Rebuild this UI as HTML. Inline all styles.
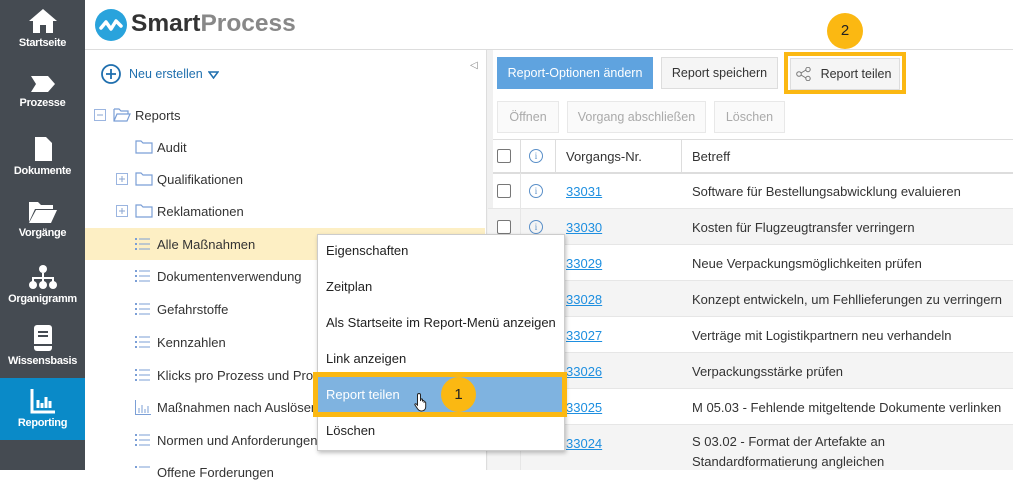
<!DOCTYPE html>
<html><head><meta charset="utf-8"><style>
*{margin:0;padding:0;box-sizing:border-box}
body{width:1013px;height:470px;overflow:hidden;background:#fff;font-family:"Liberation Sans",Arial,sans-serif;font-size:13px;color:#333;position:relative}
.a{position:absolute}
#side{left:0;top:0;width:85px;height:470px;background:#454b52}
.nav{position:absolute;left:0;width:85px;text-align:center;color:#fff;font-size:11px;font-weight:bold;letter-spacing:-0.3px}
.nav svg{display:block;margin:0 auto 3px}
.tr{position:absolute;white-space:nowrap;font-size:13px;color:#333}
.btn{position:absolute;height:32px;border:1px solid #ddd;background:#f5f5f5;font-size:12.5px;line-height:30px;text-align:center;color:#333;white-space:nowrap}
.dis{color:#aaa;background:#fafafa;border-color:#e8e8e8}
.row{position:absolute;left:488px;width:525px;height:36px;border-bottom:1px solid #e6e6e6;white-space:nowrap}
.row .cb{position:absolute;left:9px;top:11px;width:14px;height:14px;border:1.5px solid #777;border-radius:2px;background:#fff}
.row .in{position:absolute;left:41px;top:11px;width:14px;height:14px;border:1px solid #5a8fc8;border-radius:50%;font-size:9px;color:#5a8fc8;text-align:center;line-height:12px;font-family:"Liberation Serif",serif}
.row .n{position:absolute;left:78px;top:11px;color:#1e8fe0;text-decoration:underline}
.row .t{position:absolute;left:204px;top:11px;color:#333}
.mi{position:absolute;font-size:13px;color:#222;white-space:nowrap}
</style></head><body>
<div id="side" class="a"></div>
<div class="a" style="left:0;top:378px;width:85px;height:62px;background:#0a8ac8"></div>
<div class="nav" style="top:8px"><svg width="30" height="26" viewBox="0 0 30 26"><path d="M15 1L1 13h4v12h7v-8h6v8h7V13h4z" fill="#fff"/></svg>Startseite</div>
<div class="nav" style="top:74px"><svg width="26" height="20" viewBox="0 0 26 20"><path d="M1 2h17l7 8-7 8H1l5-8z" fill="#fff"/></svg>Prozesse</div>
<div class="nav" style="top:136px"><svg width="20" height="26" viewBox="0 0 20 26"><path d="M2 1h11l6 6v18H2z" fill="#fff"/></svg>Dokumente</div>
<div class="nav" style="top:200px"><svg width="30" height="24" viewBox="0 0 30 24"><path d="M1 2h9l3 3h12v4H7L1 22z M8 10h21l-6 13H1z" fill="#fff"/></svg>Vorgänge</div>
<div class="nav" style="top:264px"><svg width="30" height="26" viewBox="0 0 30 26"><circle cx="15" cy="5" r="4" fill="#fff"/><path d="M15 9v5M5 18v-4h20v4M15 14v4" stroke="#fff" stroke-width="2" fill="none"/><circle cx="5" cy="21" r="4" fill="#fff"/><circle cx="15" cy="21" r="4" fill="#fff"/><circle cx="25" cy="21" r="4" fill="#fff"/></svg>Organigramm</div>
<div class="nav" style="top:324px"><svg width="22" height="28" viewBox="0 0 22 28"><rect x="2" y="1" width="18" height="26" rx="3" fill="#fff"/><path d="M6 8h10M6 12h10M2 21h18" stroke="#454b52" stroke-width="2"/></svg>Wissensbasis</div>
<div class="nav" style="top:388px"><svg width="26" height="26" viewBox="0 0 26 26"><path d="M2 1v23h23" stroke="#fff" stroke-width="3" fill="none"/><path d="M8 12v8M12 15v5M16 9v11M20 13v7" stroke="#fff" stroke-width="3"/></svg>Reporting</div>

<!-- header -->
<div class="a" style="left:85px;top:49px;width:928px;height:1px;background:#ddd"></div>
<svg class="a" style="left:95px;top:9px" width="32" height="32" viewBox="0 0 32 32"><circle cx="16" cy="16" r="16" fill="#29a3dc"/><path d="M6 19l5-6 5 7 5-8 5 5" stroke="#fff" stroke-width="3.5" fill="none" stroke-linecap="round" stroke-linejoin="round"/></svg>
<div class="a" style="left:131px;top:9px;font-size:24.5px;font-weight:bold;line-height:30px;white-space:nowrap"><span style="color:#333">Smart</span><span style="color:#888">Process</span></div>

<!-- left panel -->
<div class="a" style="left:486px;top:50px;width:1px;height:420px;background:#ddd"></div>
<div class="a" style="left:470px;top:60px;font-size:10px;color:#888">◁</div>
<svg class="a" style="left:101px;top:64px" width="20" height="20"><circle cx="10" cy="10" r="9" stroke="#1f6fae" stroke-width="1.8" fill="none"/><path d="M10 5v10M5 10h10" stroke="#1f6fae" stroke-width="1.8"/></svg>
<div class="tr" style="left:129px;top:67px;font-size:12.5px;color:#1f6fae">Neu erstellen</div>
<svg class="a" style="left:208px;top:71px" width="11" height="8"><path d="M1 1h9L5.5 7z" stroke="#1f6fae" stroke-width="1.5" fill="none"/></svg>

<div class="a" style="left:85px;top:228px;width:400px;height:32px;background:#fdefc4"></div>
<svg class="a" style="left:94px;top:109px" width="12" height="12"><rect x=".5" y=".5" width="11" height="11" fill="none" stroke="#9bb5e0"/><path d="M3 6h6" stroke="#8aa4d0"/></svg>
<svg class="a" style="left:113px;top:107px" width="18" height="15"><path d="M1 2h5l2 2h7v3M1 2v12h13l3-7H4L1 14" stroke="#7b9fd6" fill="none" stroke-width="1.2"/></svg>
<div class="tr" style="left:135px;top:108px">Reports</div>

<svg class="a" style="left:135px;top:139px" width="18" height="15"><path d="M1 2h5l2 2h9v10H1z" stroke="#7b9fd6" fill="none" stroke-width="1.2"/></svg>
<div class="tr" style="left:157px;top:140px">Audit</div>
<svg class="a" style="left:116px;top:173px" width="12" height="12"><rect x=".5" y=".5" width="11" height="11" fill="none" stroke="#9bb5e0"/><path d="M3 6h6M6 3v6" stroke="#8aa4d0"/></svg>
<svg class="a" style="left:135px;top:171px" width="18" height="15"><path d="M1 2h5l2 2h9v10H1z" stroke="#7b9fd6" fill="none" stroke-width="1.2"/></svg>
<div class="tr" style="left:157px;top:172px">Qualifikationen</div>
<svg class="a" style="left:116px;top:205px" width="12" height="12"><rect x=".5" y=".5" width="11" height="11" fill="none" stroke="#9bb5e0"/><path d="M3 6h6M6 3v6" stroke="#8aa4d0"/></svg>
<svg class="a" style="left:135px;top:203px" width="18" height="15"><path d="M1 2h5l2 2h9v10H1z" stroke="#7b9fd6" fill="none" stroke-width="1.2"/></svg>
<div class="tr" style="left:157px;top:204px">Reklamationen</div>

<svg class="a" style="left:135px;top:237px" width="16" height="14"><g fill="#7b9fd6"><rect x="0" y="1" width="2" height="2"/><rect x="0" y="6" width="2" height="2"/><rect x="0" y="11" width="2" height="2"/><rect x="4" y="1.5" width="11" height="1"/><rect x="4" y="6.5" width="11" height="1"/><rect x="4" y="11.5" width="11" height="1"/></g></svg>
<div class="tr" style="left:157px;top:237px">Alle Maßnahmen</div>
<svg class="a" style="left:135px;top:269px" width="16" height="14"><g fill="#7b9fd6"><rect x="0" y="1" width="2" height="2"/><rect x="0" y="6" width="2" height="2"/><rect x="0" y="11" width="2" height="2"/><rect x="4" y="1.5" width="11" height="1"/><rect x="4" y="6.5" width="11" height="1"/><rect x="4" y="11.5" width="11" height="1"/></g></svg>
<div class="tr" style="left:157px;top:269px">Dokumentenverwendung</div>
<svg class="a" style="left:135px;top:302px" width="16" height="14"><g fill="#7b9fd6"><rect x="0" y="1" width="2" height="2"/><rect x="0" y="6" width="2" height="2"/><rect x="0" y="11" width="2" height="2"/><rect x="4" y="1.5" width="11" height="1"/><rect x="4" y="6.5" width="11" height="1"/><rect x="4" y="11.5" width="11" height="1"/></g></svg>
<div class="tr" style="left:157px;top:302px">Gefahrstoffe</div>
<svg class="a" style="left:135px;top:335px" width="16" height="14"><g fill="#7b9fd6"><rect x="0" y="1" width="2" height="2"/><rect x="0" y="6" width="2" height="2"/><rect x="0" y="11" width="2" height="2"/><rect x="4" y="1.5" width="11" height="1"/><rect x="4" y="6.5" width="11" height="1"/><rect x="4" y="11.5" width="11" height="1"/></g></svg>
<div class="tr" style="left:157px;top:335px">Kennzahlen</div>
<svg class="a" style="left:135px;top:368px" width="16" height="14"><g fill="#7b9fd6"><rect x="0" y="1" width="2" height="2"/><rect x="0" y="6" width="2" height="2"/><rect x="0" y="11" width="2" height="2"/><rect x="4" y="1.5" width="11" height="1"/><rect x="4" y="6.5" width="11" height="1"/><rect x="4" y="11.5" width="11" height="1"/></g></svg>
<div class="tr" style="left:157px;top:368px">Klicks pro Prozess und Pro</div>
<svg class="a" style="left:135px;top:400px" width="16" height="15"><path d="M.5 0v14.5H16M4 13V8M7 13V5M10 13V9M13 13V6" stroke="#7b9fd6" fill="none"/></svg>
<div class="tr" style="left:157px;top:400px">Maßnahmen nach Auslöser</div>
<svg class="a" style="left:135px;top:433px" width="16" height="14"><g fill="#7b9fd6"><rect x="0" y="1" width="2" height="2"/><rect x="0" y="6" width="2" height="2"/><rect x="0" y="11" width="2" height="2"/><rect x="4" y="1.5" width="11" height="1"/><rect x="4" y="6.5" width="11" height="1"/><rect x="4" y="11.5" width="11" height="1"/></g></svg>
<div class="tr" style="left:157px;top:433px">Normen und Anforderungen</div>
<svg class="a" style="left:135px;top:465px" width="16" height="14"><g fill="#7b9fd6"><rect x="0" y="1" width="2" height="2"/><rect x="4" y="1.5" width="11" height="1"/></g></svg>
<div class="tr" style="left:157px;top:465px">Offene Forderungen</div>

<!-- right panel -->
<div class="a" style="left:487px;top:50px;width:6px;height:420px;background:#f0f0f0"></div>
<div class="btn" style="left:497px;top:57px;width:156px;background:#5fa3df;border-color:#5fa3df;color:#fff">Report-Optionen ändern</div>
<div class="btn" style="left:661px;top:57px;width:117px">Report speichern</div>
<div class="a" style="left:784px;top:52px;width:122px;height:42px;border:4px solid #fbb812"></div>
<div class="btn" style="left:790px;top:58px;width:110px;padding-left:22px">Report teilen</div>
<svg class="a" style="left:796px;top:67px" width="15" height="14"><circle cx="3" cy="7" r="2.3" fill="none" stroke="#777"/><circle cx="12" cy="2.5" r="2.2" fill="none" stroke="#777"/><circle cx="12" cy="11.5" r="2.2" fill="none" stroke="#777"/><path d="M5 6l5-3M5 8l5 3" stroke="#777"/></svg>
<div class="a" style="left:827px;top:13px;width:36px;height:36px;border-radius:50%;background:#fbb812;text-align:center;line-height:36px;font-size:15px;color:#222">2</div>
<div class="btn dis" style="left:497px;top:101px;width:62px">Öffnen</div>
<div class="btn dis" style="left:567px;top:101px;width:139px">Vorgang abschließen</div>
<div class="btn dis" style="left:714px;top:101px;width:71px">Löschen</div>

<div class="a" style="left:493px;top:139px;width:520px;height:1px;background:#ddd"></div>
<div class="a" style="left:493px;top:172px;width:520px;height:2px;background:#ddd"></div>
<div class="a" style="left:520px;top:140px;width:1px;height:32px;background:#ddd"></div>
<div class="a" style="left:555px;top:140px;width:1px;height:32px;background:#ddd"></div>
<div class="a" style="left:681px;top:140px;width:1px;height:32px;background:#ddd"></div>
<div class="a" style="left:497px;top:149px;width:14px;height:14px;border:1.5px solid #777;border-radius:2px"></div>
<div class="a" style="left:529px;top:149px;width:14px;height:14px;border:1px solid #5a8fc8;border-radius:50%;font-size:9px;color:#5a8fc8;text-align:center;line-height:12px;font-family:'Liberation Serif',serif">i</div>
<div class="tr" style="left:566px;top:149px">Vorgangs-Nr.</div>
<div class="tr" style="left:692px;top:149px">Betreff</div>

<div class="row" style="top:173px"><div class="cb"></div><div class="in">i</div><div class="n">33031</div><div class="t">Software für Bestellungsabwicklung evaluieren</div></div>
<div class="row" style="top:209px;background:#f4f4f4"><div class="cb"></div><div class="in">i</div><div class="n">33030</div><div class="t">Kosten für Flugzeugtransfer verringern</div></div>
<div class="row" style="top:245px"><div class="cb"></div><div class="in">i</div><div class="n">33029</div><div class="t">Neue Verpackungsmöglichkeiten prüfen</div></div>
<div class="row" style="top:281px;background:#f4f4f4"><div class="cb"></div><div class="in">i</div><div class="n">33028</div><div class="t">Konzept entwickeln, um Fehllieferungen zu verringern</div></div>
<div class="row" style="top:317px"><div class="cb"></div><div class="in">i</div><div class="n">33027</div><div class="t">Verträge mit Logistikpartnern neu verhandeln</div></div>
<div class="row" style="top:353px;background:#f4f4f4"><div class="cb"></div><div class="in">i</div><div class="n">33026</div><div class="t">Verpackungsstärke prüfen</div></div>
<div class="row" style="top:389px"><div class="cb"></div><div class="in">i</div><div class="n">33025</div><div class="t">M 05.03 - Fehlende mitgeltende Dokumente verlinken</div></div>
<div class="row" style="top:425px;height:45px;background:#f4f4f4;border:0"><div class="cb"></div><div class="in">i</div><div class="n">33024</div><div class="t" style="line-height:20px;top:7px">S 03.02 - Format der Artefakte an<br>Standardformatierung angleichen</div></div>
<div class="a" style="left:520px;top:173px;width:1px;height:297px;background:#e6e6e6"></div>

<!-- context menu -->
<div class="a" style="left:317px;top:234px;width:248px;height:217px;background:#fff;border:1px solid #ccc;box-shadow:1px 2px 4px rgba(0,0,0,.25)"></div>
<div class="mi a" style="left:326px;top:243px">Eigenschaften</div>
<div class="mi a" style="left:326px;top:279px">Zeitplan</div>
<div class="mi a" style="left:326px;top:315px">Als Startseite im Report-Menü anzeigen</div>
<div class="mi a" style="left:326px;top:351px">Link anzeigen</div>
<div class="a" style="left:313px;top:372px;width:254px;height:45px;border:5px solid #fbb812;background:#7fb3e0"></div>
<div class="mi a" style="left:326px;top:387px;color:#fff">Report teilen</div>
<div class="a" style="left:441px;top:377px;width:35px;height:35px;border-radius:50%;background:#fbb812;text-align:center;line-height:35px;font-size:15px;color:#222">1</div>
<svg class="a" style="left:414px;top:392px" width="16" height="20" viewBox="0 0 16 20"><path d="M5 1.5c1 0 1.5.5 1.5 1.5v6l.5-2c.7-.3 1.5 0 1.5.8v1c.5-.6 1.6-.4 1.6.5v.8c.5-.5 1.6-.3 1.6.6V15c0 2-1.5 4-4 4H7c-1.5 0-2.5-1-3.300-2L1 13c-.5-.8.3-1.600 1.200-1.100l1.300 1.300V3c0-1 .5-1.500 1.500-1.500z" fill="#fff" stroke="#222" stroke-width="1"/></svg>
<div class="mi a" style="left:326px;top:423px">Löschen</div>
</body></html>
